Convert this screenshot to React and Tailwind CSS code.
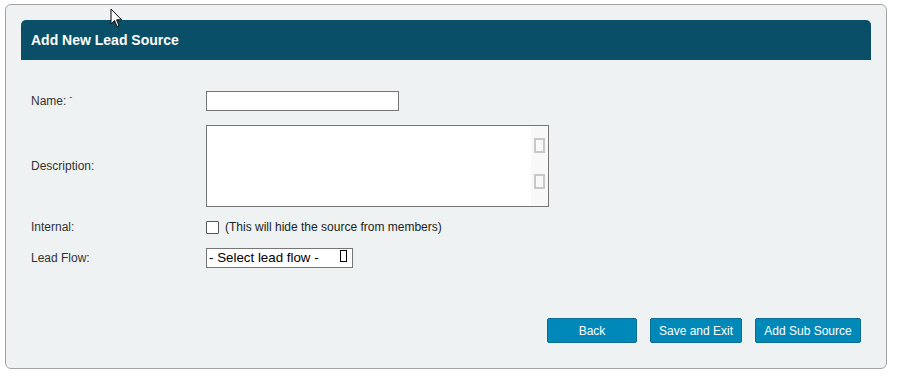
function Tofu({ className = "" }) {
  return <span className={`inline-block w-[11px] h-[15px] border-2 ${className}`} />;
}

function Row({ label, mark, children, className = "" }) {
  return (
    <div className={`flex items-center ${className}`}>
      <div className="w-[175px] text-[12px] text-[#333]">
        {label}
        {mark && <sup className="text-[9px] ml-[3px] relative -top-[5px]">-</sup>}
      </div>
      {children}
    </div>
  );
}

export default function App() {
  return (
    <div className="relative w-[899px] h-[377px] bg-white pt-[4px] pl-[5px]" style={{ fontFamily: '"Liberation Sans", Arial, sans-serif' }}>
      <div className="w-[882px] h-[365px] bg-[#eef2f3] border border-[#a3a3a3] rounded-[6px] pt-[15px] px-[15px]">
        {/* HEADER */}
        <div className="h-[40px] bg-[#094f68] rounded-t-[5px] flex items-center px-[10px]">
          <h1 className="text-white font-bold text-[14px]">Add New Lead Source</h1>
        </div>

        {/* FORM */}
        <div className="pl-[10px] pt-[31px]">
          <Row label="Name:" mark>
            <input className="w-[193px] h-[20px] bg-white border border-[#767676] outline-none" />
          </Row>

          <Row label="Description:" className="mt-[14px]">
            <div className="w-[343px] h-[82px] bg-white border border-[#767676] flex">
              <div className="flex-1" />
              <div className="w-[17px] bg-[#f8f8f8] flex flex-col items-center pt-[12px] gap-[21px]">
                <Tofu className="border-[#c8c8c8]" />
                <Tofu className="border-[#c8c8c8]" />
              </div>
            </div>
          </Row>

          <Row label="Internal:" className="mt-[11px]">
            <span className="w-[13px] h-[13px] border border-[#555] bg-white rounded-[1px]" />
            <span className="ml-[6px] text-[12px] text-[#222]">(This will hide the source from members)</span>
          </Row>

          <Row label="Lead Flow:" className="mt-[12px]">
            <div className="w-[147px] h-[20px] bg-white border border-[#767676] flex items-center pl-[2px] relative">
              <span className="text-[13.33px] text-black">- Select lead flow -</span>
              <span className="absolute right-[5px] top-[1px] inline-block w-[7px] h-[12px] border-[1.5px] border-black" />
            </div>
          </Row>
        </div>

        {/* BUTTONS */}
        <div className="flex justify-end gap-[13px] pr-[10px] mt-[50px]">
          {[["Back", "w-[90px]"], ["Save and Exit", "w-[92px]"], ["Add Sub Source", "w-[106px]"]].map(([t, w]) => (
            <button key={t} className={`${w} h-[25px] bg-[#0089b8] border border-[#0a6f93] rounded-[2px] text-white text-[12px]`}>
              {t}
            </button>
          ))}
        </div>
      </div>

      {/* cursor */}
      <svg className="absolute left-[110px] top-[8px]" width="13" height="20" viewBox="0 0 13 20">
        <path d="M1 1 L1 16 L4.5 12.5 L7 18.5 L9 17.6 L6.6 11.8 L11.5 11.8 Z" fill="white" stroke="black" strokeWidth="1" strokeLinejoin="round" />
      </svg>
    </div>
  );
}
